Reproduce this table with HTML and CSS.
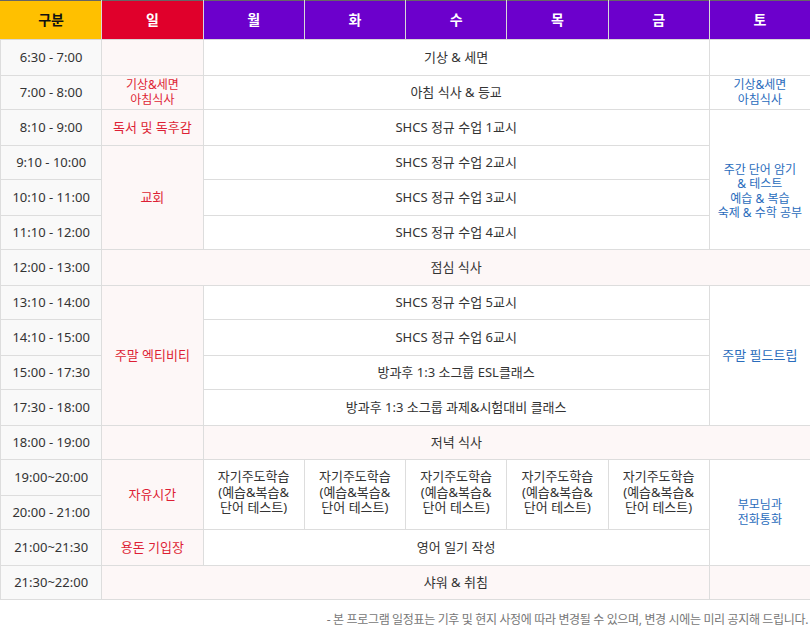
FILE: index.html
```html
<!DOCTYPE html>
<html lang="ko">
<head>
<meta charset="utf-8">
<title>주간 일정표</title>
<link rel="stylesheet" href="styles.css">
</head>
<body>
<div class="wrap">
<table class="sched">
  <colgroup>
    <col><col><col><col><col><col><col><col>
  </colgroup>
  <thead>
    <tr class="head">
      <th class="h-gu">구분</th>
      <th class="h-sun">일</th>
      <th class="h-day">월</th>
      <th class="h-day">화</th>
      <th class="h-day">수</th>
      <th class="h-day">목</th>
      <th class="h-day">금</th>
      <th class="h-day">토</th>
    </tr>
  </thead>
  <tbody>
    <tr class="r36">
      <td class="time">6:30 - 7:00</td>
      <td class="sun"></td>
      <td colspan="5">기상 &amp; 세면</td>
      <td></td>
    </tr>
    <tr class="r34">
      <td class="time">7:00 - 8:00</td>
      <td class="sun small">기상&amp;세면<br>아침식사</td>
      <td colspan="5">아침 식사 &amp; 등교</td>
      <td class="sat small">기상&amp;세면<br>아침식사</td>
    </tr>
    <tr class="r36">
      <td class="time">8:10 - 9:00</td>
      <td class="sun">독서 및 독후감</td>
      <td colspan="5">SHCS 정규 수업 1교시</td>
      <td class="sat small study" rowspan="4">주간 단어 암기<br>&amp; 테스트<br>예습 &amp; 복습<br>숙제 &amp; 수학 공부</td>
    </tr>
    <tr class="r34">
      <td class="time">9:10 - 10:00</td>
      <td class="sun" rowspan="3">교회</td>
      <td colspan="5">SHCS 정규 수업 2교시</td>
    </tr>
    <tr class="r36">
      <td class="time">10:10 - 11:00</td>
      <td colspan="5">SHCS 정규 수업 3교시</td>
    </tr>
    <tr class="r34">
      <td class="time">11:10 - 12:00</td>
      <td colspan="5">SHCS 정규 수업 4교시</td>
    </tr>
    <tr class="r36">
      <td class="time">12:00 - 13:00</td>
      <td class="pink nor"></td>
      <td class="pink nor" colspan="5">점심 식사</td>
      <td class="pink"></td>
    </tr>
    <tr class="r34">
      <td class="time">13:10 - 14:00</td>
      <td class="sun" rowspan="4">주말 엑티비티</td>
      <td colspan="5">SHCS 정규 수업 5교시</td>
      <td class="sat" rowspan="4">주말 필드트립</td>
    </tr>
    <tr class="r36">
      <td class="time">14:10 - 15:00</td>
      <td colspan="5">SHCS 정규 수업 6교시</td>
    </tr>
    <tr class="r34">
      <td class="time">15:00 - 17:30</td>
      <td colspan="5">방과후 1:3 소그룹 ESL클래스</td>
    </tr>
    <tr class="r36">
      <td class="time">17:30 - 18:00</td>
      <td colspan="5">방과후 1:3 소그룹 과제&amp;시험대비 클래스</td>
    </tr>
    <tr class="r34">
      <td class="time">18:00 - 19:00</td>
      <td class="pink"></td>
      <td class="pink nor" colspan="5">저녁 식사</td>
      <td class="pink"></td>
    </tr>
    <tr class="r36">
      <td class="time">19:00~20:00</td>
      <td class="sun" rowspan="2">자유시간</td>
      <td class="self" rowspan="2">자기주도학습<br>(예습&amp;복습&amp;<br>단어 테스트)</td>
      <td class="self" rowspan="2">자기주도학습<br>(예습&amp;복습&amp;<br>단어 테스트)</td>
      <td class="self" rowspan="2">자기주도학습<br>(예습&amp;복습&amp;<br>단어 테스트)</td>
      <td class="self" rowspan="2">자기주도학습<br>(예습&amp;복습&amp;<br>단어 테스트)</td>
      <td class="self" rowspan="2">자기주도학습<br>(예습&amp;복습&amp;<br>단어 테스트)</td>
      <td class="sat small" rowspan="3">부모님과<br>전화통화</td>
    </tr>
    <tr class="r34">
      <td class="time">20:00 - 21:00</td>
    </tr>
    <tr class="r36">
      <td class="time">21:00~21:30</td>
      <td class="sun">용돈 기입장</td>
      <td colspan="5">영어 일기 작성</td>
    </tr>
    <tr class="r34">
      <td class="time">21:30~22:00</td>
      <td class="pink nor"></td>
      <td class="pink" colspan="5">샤워 &amp; 취침</td>
      <td class="pink"></td>
    </tr>
  </tbody>
</table>
<p class="note">- 본 프로그램 일정표는 기후 및 현지 사정에 따라 변경될 수 있으며, 변경 시에는 미리 공지해 드립니다.</p>
</div>
</body>
</html>
```

FILE: styles.css
```css
html, body {
  margin: 0;
  padding: 0;
  background: #ffffff;
}

body {
  font-family: "Noto Sans", "Noto Sans CJK KR", sans-serif;
  color: #333333;
}

.wrap {
  width: 810px;
}

.sched {
  width: 810px;
  border-collapse: collapse;
  table-layout: fixed;
  font-size: 13px;
}

.sched col {
  width: 101.25px;
}

.sched th,
.sched td {
  border: 1px solid #dddddd;
  text-align: center;
  vertical-align: middle;
  padding: 0;
  line-height: 1.2;
}

.head th {
  height: 38px;
  font-size: 14px;
  font-weight: bold;
  color: #ffffff;
  border-color: #d8d8d8;
  border-top-color: #666666;
}

.head .h-gu {
  background: #ffc000;
  color: #111111;
  border-left-color: #ffc000;
}

.head .h-sun {
  background: #e0002b;
}

.head .h-day {
  background: #6c00cc;
}

.r36 td {
  height: 35px;
}

.r34 td {
  height: 33px;
}

.time {
  background: #f9f9f9;
  color: #333333;
}

.sun {
  background: #fdf7f7;
  color: #dd1f35;
}

.sat {
  color: #2a6cbc;
}

.small {
  font-size: 12px;
  line-height: 13.5px;
}

.study {
  padding-top: 24px !important;
}

.pink {
  background: #fdf7f7;
}

.nor {
  border-right-style: hidden !important;
}

.self {
  font-size: 13px;
  line-height: 16px;
  padding-bottom: 4px !important;
}

.note {
  margin: 10px 2px 0 0;
  text-align: right;
  font-size: 12px;
  letter-spacing: -0.35px;
  color: #777777;
}
```
